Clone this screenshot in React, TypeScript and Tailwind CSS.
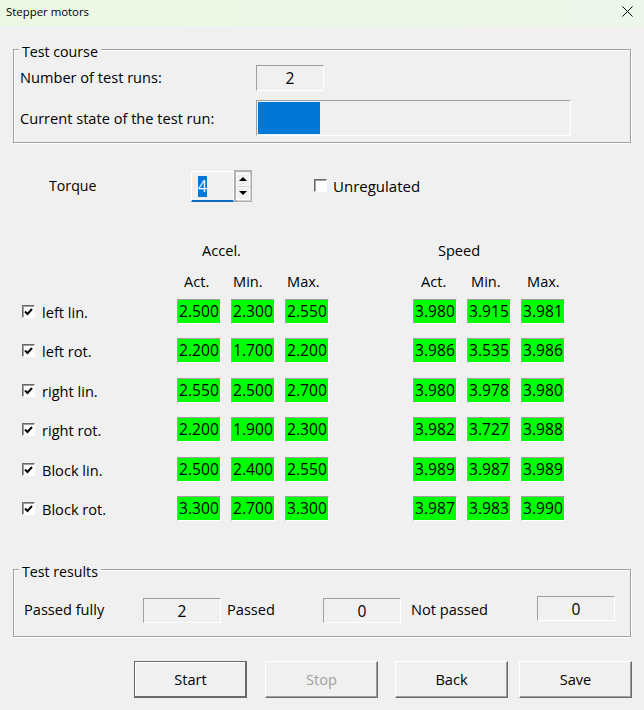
import type { ReactNode } from 'react'

const rows = [
  { name: 'left lin.', accel: ['2.500', '2.300', '2.550'], speed: ['3.980', '3.915', '3.981'], mt: 'mt-0' },
  { name: 'left rot.', accel: ['2.200', '1.700', '2.200'], speed: ['3.986', '3.535', '3.986'], mt: 'mt-[14px]' },
  { name: 'right lin.', accel: ['2.550', '2.500', '2.700'], speed: ['3.980', '3.978', '3.980'], mt: 'mt-[15px]' },
  { name: 'right rot.', accel: ['2.200', '1.900', '2.300'], speed: ['3.982', '3.727', '3.988'], mt: 'mt-[14px]' },
  { name: 'Block lin.', accel: ['2.500', '2.400', '2.550'], speed: ['3.989', '3.987', '3.989'], mt: 'mt-[15px]' },
  { name: 'Block rot.', accel: ['3.300', '2.700', '3.300'], speed: ['3.987', '3.983', '3.990'], mt: 'mt-[14px]' },
]

function Group({ title, className, children }: { title: string; className: string; children: ReactNode }) {
  return (
    <div className={`relative mx-[13px] w-[618px] border border-[#a0a0a0] shadow-[inset_1px_1px_0_#fff,1px_1px_0_#fff] ${className}`}>
      <span className="absolute -top-[8px] left-[5px] bg-[#f0f0f0] px-[3px] text-[14.2px] leading-[20px]">{title}</span>
      {children}
    </div>
  )
}

function Sunken({ className, children }: { className: string; children?: ReactNode }) {
  return (
    <div className={`flex items-center justify-center border border-b-white border-l-[#a0a0a0] border-r-white border-t-[#a0a0a0] ${className}`}>
      {children}
    </div>
  )
}

function Check({ checked }: { checked?: boolean }) {
  return (
    <span className="block h-[13px] w-[13px] shrink-0 border border-b-white border-l-[#696969] border-r-white border-t-[#696969] bg-white shadow-[inset_1px_1px_0_#a0a0a0]">
      {checked && (
        <svg viewBox="0 0 11 11" className="h-[11px] w-[11px]">
          <path d="M2 5.5 L4.5 8 L9 3" fill="none" stroke="#000" strokeWidth="2" />
        </svg>
      )}
    </span>
  )
}

function Val({ v }: { v: string }) {
  return (
    <div className="flex h-[25px] w-[44px] items-center justify-center border border-b-white border-l-[#a0a0a0] border-r-white border-t-[#a0a0a0] bg-[#00ff00] pb-[1px] text-[15.6px]">
      {v}
    </div>
  )
}

function Btn({ label, isDefault, disabled, className }: { label: string; isDefault?: boolean; disabled?: boolean; className?: string }) {
  const frame = isDefault
    ? 'border-[#696969] border shadow-[inset_-1px_-1px_0_#696969,inset_1px_1px_0_#fff]'
    : 'border border-b-[#696969] border-l-white border-r-[#696969] border-t-white shadow-[inset_-1px_-1px_0_#a0a0a0]'
  return (
    <div className={`flex h-[37px] w-[113px] items-center justify-center pb-[2px] ${frame} ${disabled ? 'text-[#a0a0a0]' : ''} ${className ?? ''}`}>
      {label}
    </div>
  )
}

export default function App() {
  return (
    <div className="flex h-[710px] w-[644px] flex-col overflow-hidden bg-[#f0f0f0] font-['Open_Sans',sans-serif] text-[14.6px] leading-[20px] text-black">
      <div className="flex h-[26px] items-center justify-between bg-gradient-to-r from-[#ecf8e4] to-[#edf6ea] pl-[6px] pr-[11px] text-[11.4px]">
        <span className="-mt-[3px]">Stepper motors</span>
        <svg viewBox="0 0 11 11" className="-mt-[3px] h-[11px] w-[11px]">
          <path d="M.5.5 L10.5 10.5 M10.5.5 L.5 10.5" stroke="#000" strokeWidth="1" />
        </svg>
      </div>

      <Group title="Test course" className="mt-[23px] h-[94px]">
        <div className="mt-[15px] flex h-[26px] items-center pl-[6px]">
          <span className="-mt-[2px] w-[236px]">Number of test runs:</span>
          <Sunken className="h-[26px] w-[68px] text-[15.6px]">2</Sunken>
        </div>
        <div className="mt-[9px] flex h-[36px] items-center pl-[6px]">
          <span className="-mt-[1px] w-[236px]">Current state of the test run:</span>
          <Sunken className="!justify-start h-[36px] w-[315px] p-[1px]">
            <div className="h-full w-[62px] bg-[#0078d7]" />
          </Sunken>
        </div>
      </Group>

      <div className="mt-[27px] flex h-[32px] items-center pl-[49px]">
        <span className="w-[142px] text-[14.2px]">Torque</span>
        <div className="flex h-[31px] w-[43px] items-center self-end border-x border-b-2 border-t border-x-white border-b-[#0a6cc0] border-t-white pl-[6px]">
          <span className="bg-[#0078d7] text-[15.6px] leading-[21px] text-white">4</span>
        </div>
        <div className="flex h-[32px] w-[18px] flex-col items-center justify-center gap-[1px] border-2 border-[#b0b0b0]">
          <div className="flex h-[13px] w-[14px] items-center justify-center border border-white shadow-[1px_1px_0_#d0d0d0]">
            <div className="h-0 w-0 border-x-[4px] border-b-[4px] border-x-transparent border-b-black" />
          </div>
          <div className="flex h-[13px] w-[14px] items-center justify-center border border-white shadow-[1px_1px_0_#d0d0d0]">
            <div className="h-0 w-0 border-x-[4px] border-t-[4px] border-x-transparent border-t-black" />
          </div>
        </div>
        <div className="-mt-[1px] ml-[62px] flex items-center gap-[6px]">
          <Check />
          <span className="text-[15px]">Unregulated</span>
        </div>
      </div>

      <div className="mt-[38px] flex h-[20px]">
        <span className="ml-[202px]">Accel.</span>
        <span className="ml-[197px]">Speed</span>
      </div>

      <div className="mt-[11px] flex h-[20px]">
        <span className="ml-[184px] w-[49px]">Act.</span>
        <span className="w-[54px]">Min.</span>
        <span className="w-[134px]">Max.</span>
        <span className="w-[50px]">Act.</span>
        <span className="w-[56px]">Min.</span>
        <span>Max.</span>
      </div>

      <div className="mt-[8px] flex flex-col">
        {rows.map((r) => (
          <div key={r.name} className={`flex h-[25px] items-center ${r.mt}`}>
            <div className="ml-[22px] flex w-[155px] items-center gap-[7px]">
              <Check checked />
              <span>{r.name}</span>
            </div>
            <div className="flex gap-[10px]">
              {r.accel.map((v, i) => <Val key={i} v={v} />)}
            </div>
            <div className="ml-[84px] flex gap-[10px]">
              {r.speed.map((v, i) => <Val key={i} v={v} />)}
            </div>
          </div>
        ))}
      </div>

      <Group title="Test results" className="mt-[48px] h-[68px]">
        <div className="mt-[26px] flex h-[27px] items-start pl-[10px]">
          <span className="mt-[3px] w-[119px]">Passed fully</span>
          <Sunken className="mt-[2px] h-[25px] w-[78px] text-[15.6px]">2</Sunken>
          <span className="ml-[6px] mt-[3px] w-[96px]">Passed</span>
          <Sunken className="mt-[2px] h-[25px] w-[78px] text-[15.6px]">0</Sunken>
          <span className="ml-[10px] mt-[3px] w-[126px]">Not passed</span>
          <Sunken className="h-[25px] w-[78px] text-[15.6px]">0</Sunken>
        </div>
      </Group>

      <div className="mt-[24px] flex pl-[134px]">
        <Btn label="Start" isDefault />
        <Btn label="Stop" disabled className="ml-[18px]" />
        <Btn label="Back" className="ml-[17px]" />
        <Btn label="Save" className="ml-[11px]" />
      </div>
    </div>
  )
}
